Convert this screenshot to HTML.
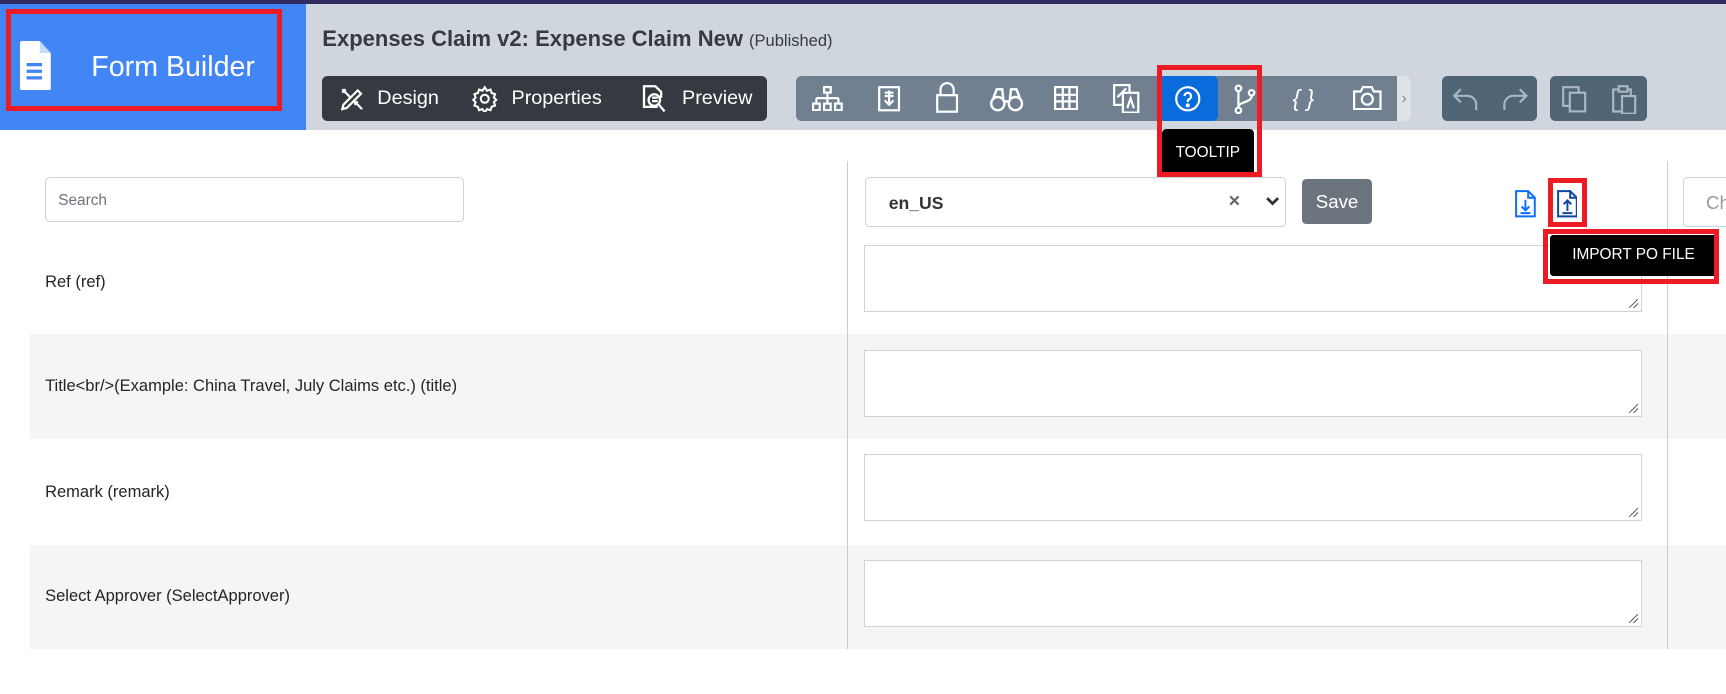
<!DOCTYPE html>
<html><head><meta charset="utf-8"><style>
*{box-sizing:border-box;margin:0;padding:0}
html,body{width:1726px;height:694px;overflow:hidden;background:#fff}
#w{zoom:1.1;width:1570px;height:631px;position:relative;font-family:"Liberation Sans",sans-serif;color:#212529}
.a{position:absolute}
svg{display:block}
.lbl{position:absolute;left:41px;font-size:15px;color:#212529}
.ta{position:absolute;left:785px;width:708px;height:61px;border:1px solid #ced4da;background:#fff}
.ta:after{content:"";position:absolute;right:3px;bottom:3px;width:8px;height:8px;background:linear-gradient(135deg,transparent 45%,#666 46%,#666 54%,transparent 55%,transparent 70%,#666 71%,#666 79%,transparent 80%)}
.red{position:absolute;border:5px solid #ed1c24}
</style></head><body><div id="w">
<div class="a" style="left:0;top:0;width:1570px;height:4px;background:#302a5e"></div>
<div class="a" style="left:0;top:4px;width:278px;height:114px;background:#4285f4"></div>
<div class="a" style="left:278px;top:4px;width:1292px;height:114px;background:#cfd6de"></div>
<svg class="a" style="left:18px;top:37px" width="28" height="45" viewBox="0 0 28 45"><path d="M2 0H18L28 11V43a2 2 0 0 1-2 2H2a2 2 0 0 1-2-2V2a2 2 0 0 1 2-2z" fill="#fff"/><path d="M18 0V11H28" fill="#c6dafc"/><rect x="6" y="20" width="14" height="3" fill="#4285f4"/><rect x="6" y="26" width="14" height="3" fill="#4285f4"/><rect x="6" y="32" width="14" height="3" fill="#4285f4"/></svg>
<div class="a" style="left:83px;top:46px;font-size:26px;color:#fff">Form Builder</div>
<div class="red" style="left:5px;top:8px;width:251px;height:93px"></div>
<div class="a" style="left:293px;top:24px;font-size:20px;font-weight:bold;color:#343a40">Expenses Claim v2: Expense Claim New <span style="font-weight:normal;font-size:15px">(Published)</span></div>
<div class="a" style="left:293px;top:69px;width:404px;height:41px;background:#343a40;border-radius:5px;color:#fff;font-size:18px">
<svg class="a" style="left:15px;top:9px" width="24" height="24" viewBox="0 0 24 24" fill="none" stroke="#fff" stroke-width="2"><path d="M3 21l4-1L20 7l-3-3L4 17z"/><path d="M3 3l7 7M14 14l7 7M17 14l-3 3M6 3L3 6"/></svg>
<div class="a" style="left:50px;top:10px">Design</div>
<svg class="a" style="left:135px;top:8px" width="25" height="25" viewBox="0 0 24 24" fill="none" stroke="#fff" stroke-width="1.8"><circle cx="12" cy="12" r="3.5"/><path d="M12 2l2 3 3-1 1 3 3 1-1 3 2 2-2 2 1 3-3 1-1 3-3-1-2 3-2-3-3 1-1-3-3-1 1-3-2-2 2-2-1-3 3-1 1-3 3 1z"/></svg>
<div class="a" style="left:172px;top:10px">Properties</div>
<svg class="a" style="left:289px;top:7px" width="26" height="27" viewBox="0 0 24 26" fill="none" stroke="#fff" stroke-width="2"><path d="M15 20H3V2h10l5 5v5"/><circle cx="12" cy="14" r="5"/><path d="M16 18l5 6M10 12h5M10 15h5"/></svg>
<div class="a" style="left:327px;top:10px">Preview</div>
</div>
<div class="a" style="left:724px;top:69px;width:559px;height:41px;background:#708090;border-radius:5px;overflow:hidden">
<div class="a" style="left:546px;top:0;width:13px;height:41px;background:#dfe3e7;color:#888;font-size:14px;text-align:center;line-height:41px">›</div>
<div class="a" style="left:326px;top:0;width:57px;height:41px;background:#6c7e90;border-radius:5px"></div>
<div class="a" style="left:330px;top:0;width:53px;height:41px;background:#0a6cdc;border-radius:5px"></div>
<svg class="a" style="left:14px;top:9px" width="28" height="23" viewBox="0 0 28 23" fill="none" stroke="#fff" stroke-width="2"><rect x="11" y="1" width="6" height="5"/><path d="M14 6v5M4 11h20M4 11v5M14 11v5M24 11v5"/><rect x="1" y="16" width="6" height="6"/><rect x="11" y="16" width="6" height="6"/><rect x="21" y="16" width="6" height="6"/></svg>
<svg class="a" style="left:73px;top:8px" width="22" height="25" viewBox="0 0 22 25" fill="none" stroke="#fff" stroke-width="2"><rect x="2" y="2" width="18" height="21"/><path d="M11 5v13M7 14l4 4 4-4M7 7h8M7 10h8"/></svg>
<svg class="a" style="left:126px;top:6px" width="22" height="28" viewBox="0 0 22 28" fill="none" stroke="#fff" stroke-width="2"><rect x="2" y="12" width="18" height="15"/><path d="M5 12V7a6 6 0 0 1 12 0v5"/></svg>
<svg class="a" style="left:175px;top:9px" width="32" height="24" viewBox="0 0 32 24" fill="none" stroke="#fff" stroke-width="2.2"><circle cx="8" cy="16" r="6"/><circle cx="24" cy="16" r="6"/><path d="M14 14h4M4 11l3-8h5l1 9M28 11l-3-8h-5l-1 9"/></svg>
<svg class="a" style="left:234px;top:9px" width="22" height="22" viewBox="0 0 22 22" fill="none" stroke="#fff" stroke-width="2"><rect x="1" y="1" width="20" height="20"/><path d="M8 1v20M14 1v20M1 8h20M1 14h20"/></svg>
<svg class="a" style="left:288px;top:7px" width="24" height="27" viewBox="0 0 24 27" fill="none" stroke="#fff" stroke-width="2"><rect x="1" y="1" width="14" height="18"/><rect x="9" y="8" width="14" height="18" fill="#708090"/><path d="M4 12l8-8M13 22l3-9 3 9"/></svg>
<svg class="a" style="left:343px;top:8px" width="25" height="25" viewBox="0 0 25 25" fill="none" stroke="#fff" stroke-width="2"><circle cx="12.5" cy="12.5" r="10.5"/><path d="M9.5 10a3 3 0 1 1 4 3c-1 .5-1 1.2-1 2.5"/><circle cx="12.5" cy="18.5" r=".8" fill="#fff"/></svg>
<svg class="a" style="left:398px;top:7px" width="20" height="28" viewBox="0 0 20 28" fill="none" stroke="#fff" stroke-width="2"><circle cx="4" cy="4" r="2.5"/><circle cx="4" cy="24" r="2.5"/><circle cx="16" cy="8" r="2.5"/><path d="M4 7v14M16 11c0 6-12 5-12 10"/></svg>
<div class="a" style="left:451px;top:8px;color:#fff;font-size:21px;font-style:italic">{ }</div>
<svg class="a" style="left:506px;top:9px" width="26" height="22" viewBox="0 0 26 22" fill="none" stroke="#fff" stroke-width="2"><path d="M1 5h6l2-4h8l2 4h6v16H1z"/><circle cx="13" cy="12" r="5"/></svg>
</div>
<div class="a" style="left:1311px;top:69px;width:86px;height:41px;background:#4f6474;border-radius:5px">
<svg class="a" style="left:9px;top:10px" width="26" height="22" viewBox="0 0 26 22" fill="none" stroke="#aab6c2" stroke-width="2"><path d="M8 2L2 8l6 6M2 8h12a8 8 0 0 1 8 8v5"/></svg>
<svg class="a" style="left:53px;top:10px" width="26" height="22" viewBox="0 0 26 22" fill="none" stroke="#aab6c2" stroke-width="2"><path d="M18 2l6 6-6 6M24 8H12a8 8 0 0 0-8 8v5"/></svg>
</div>
<div class="a" style="left:1409px;top:69px;width:88px;height:41px;background:#4f6474;border-radius:5px">
<svg class="a" style="left:10px;top:8px" width="24" height="26" viewBox="0 0 24 26" fill="none" stroke="#aab6c2" stroke-width="2"><rect x="2" y="2" width="14" height="17"/><rect x="8" y="7" width="14" height="17" fill="#4f6474"/></svg>
<svg class="a" style="left:56px;top:7px" width="24" height="28" viewBox="0 0 24 28" fill="none" stroke="#aab6c2" stroke-width="2"><path d="M6 5H2v20h8"/><rect x="7" y="2" width="8" height="5"/><rect x="10" y="11" width="12" height="16"/><path d="M16 5h2v6"/></svg>
</div>
<!-- content -->
<div class="a" style="left:41px;top:161px;width:381px;height:41px;border:1px solid #ced4da;border-radius:4px;padding:13px 11px;font-size:14px;color:#6c757d">Search</div>
<div class="a" style="left:27px;top:304px;width:1543px;height:95px;background:#f5f5f5"></div>
<div class="a" style="left:27px;top:495px;width:1543px;height:95px;background:#f5f5f5"></div>
<div class="a" style="left:770px;top:146px;width:1px;height:444px;background:#ccc"></div>
<div class="a" style="left:1515px;top:146px;width:1px;height:444px;background:#ccc"></div>
<div class="a" style="left:786px;top:161px;width:383px;height:45px;border:1px solid #ced4da;border-radius:4px;background:#fff">
<div class="a" style="left:21px;top:14px;font-size:16px;font-weight:bold;color:#333">en_US</div>
<div class="a" style="left:330px;top:11px;font-size:18px;font-weight:bold;color:#666">×</div>
<svg class="a" style="left:364px;top:17px" width="12" height="9" viewBox="0 0 12 9" fill="none" stroke="#333" stroke-width="2.5"><path d="M1 1l5 5 5-5"/></svg>
</div>
<div class="a" style="left:1184px;top:163px;width:63px;height:41px;background:#6c757d;border-radius:4px;color:#fff;font-size:17px;line-height:41px;text-align:center">Save</div>
<svg class="a" style="left:1377px;top:173px" width="19" height="25" viewBox="0 0 19 25" fill="none" stroke="#0d6efd" stroke-width="1.8"><path d="M1 1h11l6 6v17H1z M12 1v6h6"/><path d="M9.5 9v9M6 15l3.5 3.5L13 15M5 21h9"/></svg>
<svg class="a" style="left:1415px;top:173px" width="19" height="25" viewBox="0 0 19 25" fill="none" stroke="#0d47a1" stroke-width="1.8"><path d="M1 1h11l6 6v17H1z M12 1v6h6"/><path d="M9.5 19V10M6 13l3.5-3.5L13 13M5 21h9"/></svg>
<div class="a" style="left:1530px;top:161px;width:45px;height:45px;border:1px solid #ced4da;border-radius:4px;background:#fff;padding:13px 0 0 20px;font-size:17px;color:#999">Ch</div>
<div class="lbl" style="top:248px">Ref (ref)</div>
<div class="lbl" style="top:343px">Title&lt;br/&gt;(Example: China Travel, July Claims etc.) (title)</div>
<div class="lbl" style="top:439px">Remark (remark)</div>
<div class="lbl" style="top:534px">Select Approver (SelectApprover)</div>
<div class="ta" style="top:223px"></div>
<div class="ta" style="top:318px"></div>
<div class="ta" style="top:413px"></div>
<div class="ta" style="top:509px"></div>
<!-- overlays -->
<div class="a" style="left:1056px;top:117px;width:84px;height:43px;background:#000;color:#fff;font-size:14px;line-height:43px;text-align:center;border-radius:4px">TOOLTIP</div>
<div class="red" style="left:1052px;top:59px;width:95px;height:102px"></div>
<div class="red" style="left:1407px;top:162px;width:36px;height:44px"></div>
<div class="a" style="left:1409px;top:214px;width:152px;height:37px;background:#000;color:#fff;font-size:14px;line-height:37px;text-align:center;border-radius:3px">IMPORT PO FILE</div>
<div class="red" style="left:1403px;top:208px;width:160px;height:50px"></div>
</div></body></html>
